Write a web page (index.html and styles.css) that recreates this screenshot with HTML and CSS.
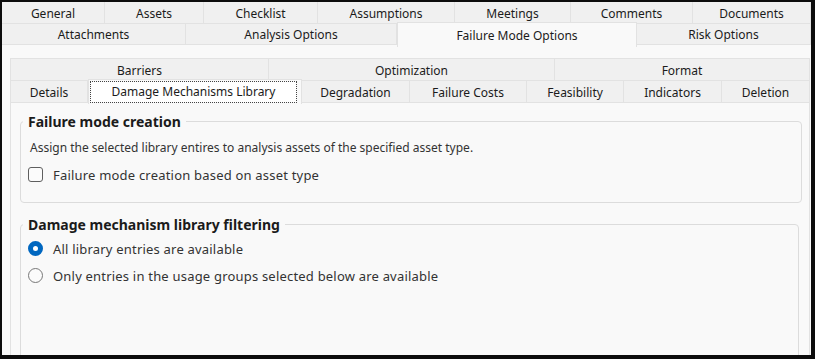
FILE: index.html
```html
<!DOCTYPE html>
<html lang="en">
<head>
  <meta charset="UTF-8" />
  <title>Failure Mode Options</title>
  <link rel="stylesheet" href="styles.css">
</head>
<body>
  <div class="window">
    <div class="tabs outer-row1">
      <div class="tab">General</div>
      <div class="tab">Assets</div>
      <div class="tab">Checklist</div>
      <div class="tab">Assumptions</div>
      <div class="tab">Meetings</div>
      <div class="tab">Comments</div>
      <div class="tab">Documents</div>
    </div>
    <div class="tabs outer-row2">
      <div class="tab">Attachments</div>
      <div class="tab">Analysis Options</div>
      <div class="tab active">Failure Mode Options</div>
      <div class="tab">Risk Options</div>
    </div>

    <div class="page">
      <div class="tabs inner-row1">
        <div class="tab">Barriers</div>
        <div class="tab">Optimization</div>
        <div class="tab">Format</div>
      </div>
      <div class="tabs inner-row2">
        <div class="tab">Details</div>
        <div class="tab active"><span class="focus">Damage Mechanisms Library</span></div>
        <div class="tab">Degradation</div>
        <div class="tab">Failure Costs</div>
        <div class="tab">Feasibility</div>
        <div class="tab">Indicators</div>
        <div class="tab">Deletion</div>
      </div>

      <div class="panel">
        <fieldset class="group first">
          <legend>Failure mode creation</legend>
          <div class="line">Assign the selected library entires to analysis assets of the specified asset type.</div>
          <label class="option"><span class="check"></span>Failure mode creation based on asset type</label>
        </fieldset>

        <fieldset class="group second">
          <legend>Damage mechanism library filtering</legend>
          <label class="option"><span class="radio on"></span>All library entries are available</label>
          <label class="option"><span class="radio"></span>Only entries in the usage groups selected below are available</label>
        </fieldset>
      </div>
    </div>
  </div>
</body>
</html>
```

FILE: styles.css
```css
body {
  margin: 0;
  background: #000;
  font-family: "Noto Sans", "Open Sans", sans-serif;
  font-size: 12px;
  color: #1b1b1b;
}
.window {
  width: 815px;
  height: 359px;
  box-sizing: border-box;
  border-style: solid;
  border-color: #0c0c0c;
  border-width: 2px 4px 4px 2px;
  background: #f9f9f9;
  overflow: hidden;
}
.tabs {
  display: grid;
}
.tab {
  display: flex;
  align-items: center;
  justify-content: center;
  background: #f0f0f0;
  border-right: 1px solid #e2e2e2;
  border-bottom: 1px solid #e2e2e2;
  box-sizing: border-box;
  white-space: nowrap;
}
.outer-row1 {
  height: 22px;
  grid-template-columns: 103px 99px 114px 137px 116px 122px 1fr;
}
.outer-row1 .tab {
  padding-top: 1px;
}
.outer-row2 {
  height: 21px;
  grid-template-columns: 184px 211px 240px 1fr;
}
.outer-row2 .tab {
  padding-top: 1px;
}
.tab.active {
  position: relative;
  z-index: 1;
  background: #f9f9f9;
  margin-top: -2px;
  margin-bottom: -2px;
  border-left: 1px solid #e2e2e2;
  border-top: 1px solid #e2e2e2;
  border-bottom: none;
}
.page {
  padding: 13px 1px 0 8px;
  height: 310px;
  box-sizing: border-box;
}
.inner-row1 {
  height: 23px;
  grid-template-columns: 258px 286px 1fr;
  border-left: 1px solid #e2e2e2;
}
.inner-row1 .tab {
  border-top: 1px solid #e2e2e2;
  padding-top: 2px;
}
.inner-row2 {
  height: 22px;
  grid-template-columns: 78px 214px 108px 117px 97px 98px 1fr;
}
.inner-row2 .tab {
  padding-top: 2px;
}
.inner-row2 .tab:first-child {
  border-left: 1px solid #e2e2e2;
}
.inner-row2 .tab.active {
  margin-bottom: -1px;
  padding: 2px 5px 2px 2px;
}
.focus {
  flex: 1;
  text-align: center;
  outline: 1px dotted #444;
  padding: 1px 0 2px;
  background: #fff;
}
.panel {
  height: 260px;
  background: #f9f9f9;
  border: 1px solid #e2e2e2;
  border-top: none;
  padding: 9px 7px 0 9px;
}
.group {
  margin: 0;
  border: 1px solid #dcdcdc;
  border-radius: 4px;
  padding: 0 7px;
}
.group legend {
  font-weight: bold;
  font-size: 14px;
  color: #1b1b1b;
  padding: 0 5px;
  margin-left: -5px;
}
.group.first {
  height: 91px;
  box-sizing: border-box;
}
.group.second {
  margin-top: 12px;
  margin-right: 3px;
  height: 160px;
  padding-top: 1px;
}
.line {
  color: #333;
  padding-left: 2px;
  line-height: 20px;
  margin-top: 7px;
  margin-bottom: 3px;
}
.option {
  display: flex;
  align-items: center;
  gap: 10px;
  height: 27px;
  font-size: 13px;
  letter-spacing: 0.2px;
  color: #333;
}
.check {
  width: 13px;
  height: 13px;
  border: 1px solid #5f5f5f;
  border-radius: 3px;
  background: #fbfbfb;
}
.radio {
  width: 13px;
  height: 13px;
  border: 1px solid #777;
  border-radius: 50%;
  background: #fbfbfb;
}
.radio.on {
  width: 5px;
  height: 5px;
  border: 5px solid #0067c0;
  background: #fff;
}
```
